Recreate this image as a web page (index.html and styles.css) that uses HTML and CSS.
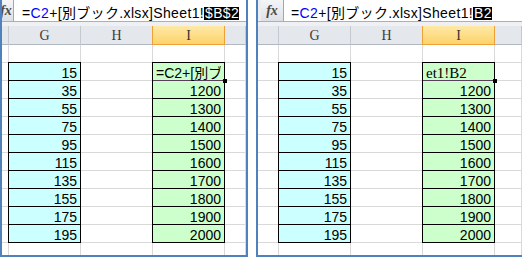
FILE: index.html
```html
<!DOCTYPE html>
<html lang="ja">
<head>
  <meta charset="UTF-8" />
  <title>別ブック参照</title>
  <link rel="stylesheet" href="styles.css">
</head>
<body>
  <div class="screens">

    <!-- before: absolute reference -->
    <div class="panel panel-left">
      <div class="formula-bar">
        <div class="fx-box"><span class="fx">fx</span></div>
        <div class="formula">=<span class="ref">C2</span>+[別ブック.xlsx]Sheet1!<span class="sel">$B$2</span></div>
      </div>
      <div class="bar-gap"></div>
      <div class="sheet">
        <div class="col-head"></div><div class="col-head">G</div><div class="col-head">H</div><div class="col-head active">I</div><div class="col-head"></div>
        <div class="cell"></div><div class="cell"></div><div class="cell"></div><div class="cell"></div><div class="cell"></div>
        <div class="cell"></div><div class="cell num blue boxed">15</div><div class="cell"></div><div class="cell green boxed edit"><span class="edit-text">=C2+[別ブ</span></div><div class="cell"></div>
        <div class="cell"></div><div class="cell num blue boxed">35</div><div class="cell"></div><div class="cell num green boxed">1200</div><div class="cell"></div>
        <div class="cell"></div><div class="cell num blue boxed">55</div><div class="cell"></div><div class="cell num green boxed">1300</div><div class="cell"></div>
        <div class="cell"></div><div class="cell num blue boxed">75</div><div class="cell"></div><div class="cell num green boxed">1400</div><div class="cell"></div>
        <div class="cell"></div><div class="cell num blue boxed">95</div><div class="cell"></div><div class="cell num green boxed">1500</div><div class="cell"></div>
        <div class="cell"></div><div class="cell num blue boxed">115</div><div class="cell"></div><div class="cell num green boxed">1600</div><div class="cell"></div>
        <div class="cell"></div><div class="cell num blue boxed">135</div><div class="cell"></div><div class="cell num green boxed">1700</div><div class="cell"></div>
        <div class="cell"></div><div class="cell num blue boxed">155</div><div class="cell"></div><div class="cell num green boxed">1800</div><div class="cell"></div>
        <div class="cell"></div><div class="cell num blue boxed">175</div><div class="cell"></div><div class="cell num green boxed">1900</div><div class="cell"></div>
        <div class="cell"></div><div class="cell num blue boxed">195</div><div class="cell"></div><div class="cell num green boxed">2000</div><div class="cell"></div>
        <div class="cell last"></div><div class="cell last"></div><div class="cell last"></div><div class="cell last"></div><div class="cell last"></div>
      </div>
    </div>

    <!-- after: relative reference -->
    <div class="panel panel-right">
      <div class="formula-bar">
        <div class="fx-box"><span class="fx">fx</span></div>
        <div class="formula">=<span class="ref">C2</span>+[別ブック.xlsx]Sheet1!<span class="sel">B2</span></div>
      </div>
      <div class="bar-gap"></div>
      <div class="sheet">
        <div class="col-head"></div><div class="col-head">G</div><div class="col-head">H</div><div class="col-head active">I</div><div class="col-head"></div>
        <div class="cell"></div><div class="cell"></div><div class="cell"></div><div class="cell"></div><div class="cell"></div>
        <div class="cell"></div><div class="cell num blue boxed">15</div><div class="cell"></div><div class="cell green boxed edit"><span class="edit-text serif">et1!B2</span></div><div class="cell"></div>
        <div class="cell"></div><div class="cell num blue boxed">35</div><div class="cell"></div><div class="cell num green boxed">1200</div><div class="cell"></div>
        <div class="cell"></div><div class="cell num blue boxed">55</div><div class="cell"></div><div class="cell num green boxed">1300</div><div class="cell"></div>
        <div class="cell"></div><div class="cell num blue boxed">75</div><div class="cell"></div><div class="cell num green boxed">1400</div><div class="cell"></div>
        <div class="cell"></div><div class="cell num blue boxed">95</div><div class="cell"></div><div class="cell num green boxed">1500</div><div class="cell"></div>
        <div class="cell"></div><div class="cell num blue boxed">115</div><div class="cell"></div><div class="cell num green boxed">1600</div><div class="cell"></div>
        <div class="cell"></div><div class="cell num blue boxed">135</div><div class="cell"></div><div class="cell num green boxed">1700</div><div class="cell"></div>
        <div class="cell"></div><div class="cell num blue boxed">155</div><div class="cell"></div><div class="cell num green boxed">1800</div><div class="cell"></div>
        <div class="cell"></div><div class="cell num blue boxed">175</div><div class="cell"></div><div class="cell num green boxed">1900</div><div class="cell"></div>
        <div class="cell"></div><div class="cell num blue boxed">195</div><div class="cell"></div><div class="cell num green boxed">2000</div><div class="cell"></div>
        <div class="cell last"></div><div class="cell last"></div><div class="cell last"></div><div class="cell last"></div><div class="cell last"></div>
      </div>
    </div>

  </div>
</body>
</html>
```

FILE: styles.css
```css
* {
  box-sizing: border-box;
}
body {
  margin: 0;
  background: #fff;
  font-family: "Liberation Sans", "Noto Sans CJK JP", sans-serif;
  font-size: 14px;
  color: #000;
}
.screens {
  display: flex;
  gap: 8px;
  height: 257px;
}
.panel {
  display: flex;
  flex-direction: column;
  border-left: 2px solid #4f81bd;
  border-bottom: 2px solid #4f81bd;
  overflow: hidden;
}
.panel-left {
  width: 248px;
  border-right: 2px solid #4f81bd;
}
.panel-right {
  flex: 1;
}

/* formula bar */
.formula-bar {
  display: flex;
  flex-shrink: 0;
  height: 22px;
  background: #eceef2;
  border-bottom: 1px solid #a7b1bd;
}
.fx-box {
  display: flex;
  justify-content: flex-end;
  overflow: hidden;
  background: linear-gradient(#f4f5f7, #dde1e6);
  border-right: 1px solid #9ea7b2;
}
.panel-left .fx-box {
  width: 12px;
}
.panel-right .fx-box {
  width: 23px;
  margin-left: 3px;
}
.fx {
  flex: none;
  width: 22px;
  text-align: center;
  font: italic bold 14px "Liberation Serif", serif;
  line-height: 21px;
  color: #4a4a4a;
}
.panel-left .fx {
  width: 14px;
}
.formula {
  flex: 1;
  background: #fff;
  padding: 7px 0 0 8px;
  line-height: 13px;
  letter-spacing: 0.35px;
  white-space: nowrap;
  overflow: hidden;
}
.panel-right .formula {
  padding-left: 7px;
}
.ref {
  color: #0000ff;
}
.sel {
  display: inline-block;
  background: #000;
  color: #fff;
  padding-left: 1px;
}
.bar-gap {
  flex-shrink: 0;
  height: 4px;
  background: #eef0f3;
}

/* sheet grid */
.sheet {
  flex: 1;
  display: grid;
  grid-template-rows: 19px repeat(11, 18px) 1fr;
}
.panel-left .sheet {
  grid-template-columns: 7px 72px 72px 72px 1fr;
}
.panel-right .sheet {
  grid-template-columns: 21px 72px 72px 72px 1fr;
}
.col-head {
  background: #e4e7eb;
  border-right: 1px solid #c3c9d1;
  border-bottom: 1px solid #aeb7c2;
  text-align: center;
  font-family: "Liberation Serif", serif;
  color: #3c3c3c;
  padding-top: 2px;
  line-height: 16px;
}
.col-head.active {
  background: linear-gradient(#ffe9a6, #fbd36b);
  border-right-color: #eea136;
  border-bottom-color: #eea136;
  box-shadow: -1px 0 0 #eea136;
  color: #333;
}
.cell {
  border-right: 1px solid #d9d9d9;
  border-bottom: 1px solid #d9d9d9;
  padding: 2px 3px 0;
  line-height: 16px;
  white-space: nowrap;
  overflow: hidden;
}
.cell.last {
  border-bottom: none;
}
.num {
  text-align: right;
}
.blue {
  background: #ccffff;
}
.green {
  background: #ccffcc;
}
.boxed {
  border-right-color: #000;
  border-bottom-color: #000;
  box-shadow: -1px -1px 0 #000, 0 -1px 0 #000, -1px 0 0 #000;
}
.edit {
  position: relative;
  z-index: 1;
  overflow: visible;
  border-bottom-color: #5a3d5a;
}
.edit::after {
  content: "";
  position: absolute;
  right: -3px;
  bottom: -3px;
  width: 4px;
  height: 4px;
  background: #000;
}
.edit-text {
  display: block;
  overflow: hidden;
}
.edit-text.serif {
  font-family: "Liberation Serif", serif;
  font-size: 15px;
}
```
